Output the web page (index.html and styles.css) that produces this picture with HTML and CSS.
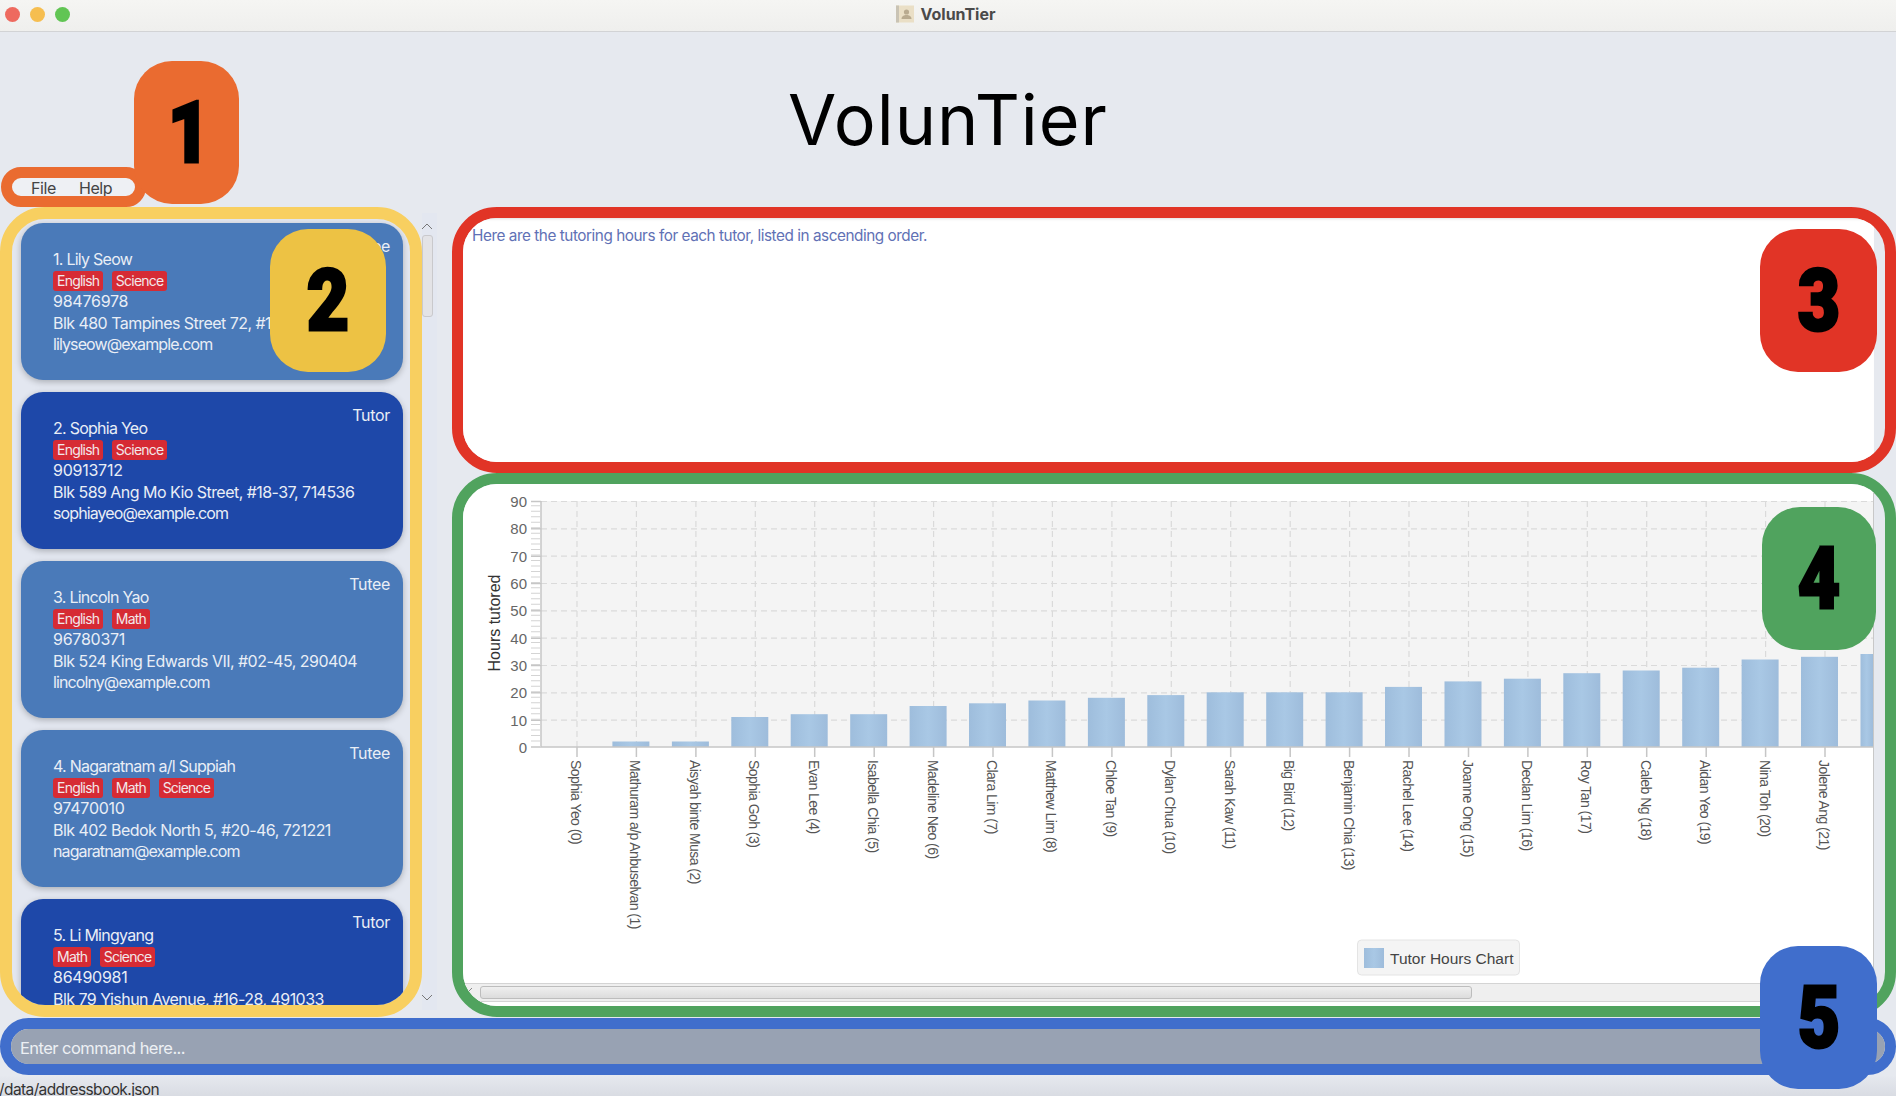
FILE: index.html
```html
<!DOCTYPE html>
<html lang="en">
<head>
<meta charset="utf-8">
<title>VolunTier</title>
<link rel="stylesheet" href="styles.css">
</head>
<body>
<div class="app">
  <header class="titlebar">
    <div class="lights"><span class="light red"></span><span class="light yellow"></span><span class="light green"></span></div>
    <div class="window-title">
      <svg class="doc-icon" width="18" height="18" viewBox="0 0 18 18"><rect width="18" height="17" y="0.5" fill="#eadfc6"/><rect width="3" height="17" y="0.5" fill="#c9c3b4"/><circle cx="10.5" cy="7" r="2.6" fill="#b9ab90"/><path d="M5.5 14c0-3 2.5-4 5-4s5 1 5 4z" fill="#b9ab90"/></svg>
      <span>VolunTier</span>
    </div>
    <div></div>
  </header>

  <h1 class="app-title">VolunTier</h1>

  <nav class="menubar"><div class="menu-inner"><span>File</span><span>Help</span></div></nav>

  <main class="workspace">
    <section class="sidebar">
      <div class="list-ring">
        <article class="card tutee">
          <div class="role">Tutee</div>
          <div class="name">1. Lily Seow</div>
          <div class="tags"><span class="tag">English</span><span class="tag">Science</span></div>
          <div class="phone">98476978</div>
          <div class="address">Blk 480 Tampines Street 72, #14-33, 520480</div>
          <div class="email">lilyseow@example.com</div>
        </article>
        <article class="card tutor">
          <div class="role">Tutor</div>
          <div class="name">2. Sophia Yeo</div>
          <div class="tags"><span class="tag">English</span><span class="tag">Science</span></div>
          <div class="phone">90913712</div>
          <div class="address">Blk 589 Ang Mo Kio Street, #18-37, 714536</div>
          <div class="email">sophiayeo@example.com</div>
        </article>
        <article class="card tutee">
          <div class="role">Tutee</div>
          <div class="name">3. Lincoln Yao</div>
          <div class="tags"><span class="tag">English</span><span class="tag">Math</span></div>
          <div class="phone">96780371</div>
          <div class="address">Blk 524 King Edwards VII, #02-45, 290404</div>
          <div class="email">lincolny@example.com</div>
        </article>
        <article class="card tutee">
          <div class="role">Tutee</div>
          <div class="name">4. Nagaratnam a/l Suppiah</div>
          <div class="tags"><span class="tag">English</span><span class="tag">Math</span><span class="tag">Science</span></div>
          <div class="phone">97470010</div>
          <div class="address">Blk 402 Bedok North 5, #20-46, 721221</div>
          <div class="email">nagaratnam@example.com</div>
        </article>
        <article class="card tutor">
          <div class="role">Tutor</div>
          <div class="name">5. Li Mingyang</div>
          <div class="tags"><span class="tag">Math</span><span class="tag">Science</span></div>
          <div class="phone">86490981</div>
          <div class="address">Blk 79 Yishun Avenue, #16-28, 491033</div>
          <div class="email">limingyang@example.com</div>
        </article>
      </div>
      <div class="vscroll">
        <svg class="chev" width="12" height="7" viewBox="0 0 12 7"><path d="M1 6l5-5 5 5" fill="none" stroke="#777" stroke-width="1"/></svg>
        <div class="vthumb"></div>
        <div class="vspacer"></div>
        <svg class="chev" width="12" height="7" viewBox="0 0 12 7"><path d="M1 1l5 5 5-5" fill="none" stroke="#777" stroke-width="1"/></svg>
      </div>
    </section>

    <section class="panels">
      <div class="result-ring">
        <div class="result-box">Here are the tutoring hours for each tutor, listed in ascending order.</div>
      </div>
      <div class="chart-ring">
        <div class="chart-box">
          <svg class="chart" width="1410" height="499" viewBox="463 484 1410 499">
            <defs>
              <linearGradient id="barfill" x1="0" x2="1" y1="0" y2="0">
                <stop offset="0" stop-color="#9ebddc"/><stop offset="0.5" stop-color="#a9c8e5"/><stop offset="1" stop-color="#9ebcdb"/>
              </linearGradient>
            </defs>
            <rect x="541" y="501" width="1332" height="246" fill="#f4f4f4"/>
            <g class="grid">
              <path d="M541 501.500H1873M541 528.800H1873M541 556.200H1873M541 583.500H1873M541 610.800H1873M541 638.200H1873M541 665.500H1873M541 692.800H1873M541 720.200H1873"/>
              <path d="M577 501V747M636.400 501V747M695.900 501V747M755.300 501V747M814.700 501V747M874.200 501V747M933.600 501V747M993 501V747M1052.400 501V747M1111.900 501V747M1171.300 501V747M1230.700 501V747M1290.200 501V747M1349.600 501V747M1409 501V747M1468.500 501V747M1527.900 501V747M1587.300 501V747M1646.700 501V747M1706.200 501V747M1765.600 501V747M1825 501V747"/>
            </g>
            <g fill="url(#barfill)">
              <rect x="612.400" y="741.500" width="37" height="5.500"/>
              <rect x="671.900" y="741.500" width="37" height="5.500"/>
              <rect x="731.300" y="717" width="37" height="30"/>
              <rect x="790.700" y="714.200" width="37" height="32.800"/>
              <rect x="850.200" y="714.200" width="37" height="32.800"/>
              <rect x="909.600" y="706" width="37" height="41"/>
              <rect x="969" y="703.300" width="37" height="43.700"/>
              <rect x="1028.400" y="700.500" width="37" height="46.500"/>
              <rect x="1087.900" y="697.800" width="37" height="49.200"/>
              <rect x="1147.300" y="695.100" width="37" height="51.900"/>
              <rect x="1206.700" y="692.300" width="37" height="54.700"/>
              <rect x="1266.200" y="692.300" width="37" height="54.700"/>
              <rect x="1325.600" y="692.300" width="37" height="54.700"/>
              <rect x="1385" y="686.900" width="37" height="60.100"/>
              <rect x="1444.500" y="681.400" width="37" height="65.600"/>
              <rect x="1503.900" y="678.700" width="37" height="68.300"/>
              <rect x="1563.300" y="673.200" width="37" height="73.800"/>
              <rect x="1622.700" y="670.500" width="37" height="76.500"/>
              <rect x="1682.200" y="667.700" width="37" height="79.300"/>
              <rect x="1741.600" y="659.500" width="37" height="87.500"/>
              <rect x="1801" y="656.800" width="37" height="90.200"/>
              <rect x="1860.500" y="654" width="12.500" height="93"/>
            </g>
            <g class="axis">
              <path d="M531 747H1873M541 501V747"/>
              <path d="M531 501.500H541M531 528.800H541M531 556.200H541M531 583.500H541M531 610.800H541M531 638.200H541M531 665.500H541M531 692.800H541M531 720.200H541"/>
              <path d="M577 747V757M636.400 747V757M695.900 747V757M755.300 747V757M814.700 747V757M874.200 747V757M933.600 747V757M993 747V757M1052.400 747V757M1111.900 747V757M1171.300 747V757M1230.700 747V757M1290.200 747V757M1349.600 747V757M1409 747V757M1468.500 747V757M1527.900 747V757M1587.300 747V757M1646.700 747V757M1706.200 747V757M1765.600 747V757M1825 747V757"/>
            </g>
            <path class="minor" d="M536 747V501"/>
            <g class="ytick">
              <text x="527" y="507">90</text><text x="527" y="534">80</text><text x="527" y="561.500">70</text><text x="527" y="589">60</text><text x="527" y="616">50</text><text x="527" y="643.500">40</text><text x="527" y="671">30</text><text x="527" y="698">20</text><text x="527" y="725.500">10</text><text x="527" y="752.500">0</text>
            </g>
            <text class="ytitle" transform="rotate(-90 500 623)" x="500" y="623">Hours tutored</text>
            <g class="xtick">
              <text transform="rotate(90 571 760)" x="571" y="760">Sophia Yeo (0)</text>
              <text transform="rotate(90 630.400 760)" x="630.400" y="760">Mathuram a/p Anbuselvan (1)</text>
              <text transform="rotate(90 689.900 760)" x="689.900" y="760">Aisyah binte Musa (2)</text>
              <text transform="rotate(90 749.300 760)" x="749.300" y="760">Sophia Goh (3)</text>
              <text transform="rotate(90 808.700 760)" x="808.700" y="760">Evan Lee (4)</text>
              <text transform="rotate(90 868.200 760)" x="868.200" y="760">Isabella Chia (5)</text>
              <text transform="rotate(90 927.600 760)" x="927.600" y="760">Madeline Neo (6)</text>
              <text transform="rotate(90 987 760)" x="987" y="760">Clara Lim (7)</text>
              <text transform="rotate(90 1046.400 760)" x="1046.400" y="760">Matthew Lim (8)</text>
              <text transform="rotate(90 1105.900 760)" x="1105.900" y="760">Chloe Tan (9)</text>
              <text transform="rotate(90 1165.300 760)" x="1165.300" y="760">Dylan Chua (10)</text>
              <text transform="rotate(90 1224.700 760)" x="1224.700" y="760">Sarah Kaw (11)</text>
              <text transform="rotate(90 1284.200 760)" x="1284.200" y="760">Big Bird (12)</text>
              <text transform="rotate(90 1343.600 760)" x="1343.600" y="760">Benjamin Chia (13)</text>
              <text transform="rotate(90 1403 760)" x="1403" y="760">Rachel Lee (14)</text>
              <text transform="rotate(90 1462.500 760)" x="1462.500" y="760">Joanne Ong (15)</text>
              <text transform="rotate(90 1521.900 760)" x="1521.900" y="760">Declan Lim (16)</text>
              <text transform="rotate(90 1581.300 760)" x="1581.300" y="760">Roy Tan (17)</text>
              <text transform="rotate(90 1640.700 760)" x="1640.700" y="760">Caleb Ng (18)</text>
              <text transform="rotate(90 1700.200 760)" x="1700.200" y="760">Aidan Yeo (19)</text>
              <text transform="rotate(90 1759.600 760)" x="1759.600" y="760">Nina Toh (20)</text>
              <text transform="rotate(90 1819 760)" x="1819" y="760">Jolene Ang (21)</text>
            </g>
            <rect class="legend" x="1357.500" y="940" width="162" height="35" rx="4"/>
            <rect x="1364" y="948" width="20" height="20" fill="url(#barfill)"/>
            <text class="legend-text" x="1390" y="963.500">Tutor Hours Chart</text>
          </svg>
          <div class="hscroll">
            <svg class="hchev" width="7" height="12" viewBox="0 0 7 12"><path d="M6 1L1 6l5 5" fill="none" stroke="#888" stroke-width="1"/></svg>
            <div class="hthumb"></div>
          </div>
        </div>
      </div>
    </section>
  </main>

  <div class="command-ring"><div class="command-box">Enter command here...</div></div>
  <footer class="status">/data/addressbook.json</footer>

  <div class="badge b1"><span>1</span></div>
  <div class="badge b2"><span>2</span></div>
  <div class="badge b3"><span>3</span></div>
  <div class="badge b4"><span>4</span></div>
  <div class="badge b5"><span>5</span></div>
</div>
</body>
</html>
```
FILE: styles.css
```css
* { box-sizing: border-box; }
html, body { margin: 0; background: #fff; }
body { font-family: "Inter", "Liberation Sans", sans-serif; }

.app {
  position: relative;
  width: 1896px;
  height: 1096px;
  background: #e6e9ef;
  display: flex;
  flex-direction: column;
  overflow: hidden;
}

/* window chrome */
.titlebar {
  height: 32px;
  flex: none;
  display: grid;
  grid-template-columns: 1fr auto 1fr;
  align-items: center;
  padding: 0 5px 3px;
  background: linear-gradient(#f5f5f3, #efefed);
  border-bottom: 1px solid #d2d3d5;
}
.lights { display: flex; gap: 10px; }
.light { width: 15px; height: 15px; border-radius: 50%; }
.light.red { background: #ee6a5f; }
.light.yellow { background: #f6be50; }
.light.green { background: #61c554; }
.window-title {
  display: flex;
  align-items: center;
  gap: 7px;
  font-size: 16px;
  font-weight: 700;
  color: #4a4a4a;
  margin-right: 5px;
}
.doc-icon { display: block; }

.app-title {
  height: 135px;
  flex: none;
  margin: 0;
  padding-top: 40px;
  font-size: 70px;
  font-weight: 400;
  line-height: 95px;
  text-align: center;
  color: #000;
  letter-spacing: 1px;
}

/* menu */
.menubar {
  width: 145px;
  height: 40px;
  flex: none;
  margin-left: 1px;
  border: 11px solid #ea6b30;
  border-radius: 20px;
  background: #eef0f4;
  overflow: hidden;
}
.menu-inner {
  display: flex;
  gap: 23px;
  padding: 1px 0 0 19px;
  font-size: 16px;
  letter-spacing: -0.4px;
  line-height: 19px;
  color: #444;
}

/* main grid */
.workspace {
  height: 810px;
  flex: none;
  display: grid;
  grid-template-columns: 452px 1444px;
}
.sidebar { display: flex; align-items: flex-start; height: 810px; }
.list-ring {
  width: 422px;
  height: 810px;
  flex: none;
  border: 12px solid #f8cf60;
  border-radius: 45px;
  background: #e3e7f0;
  padding: 4px 7px 0 9px;
  overflow: hidden;
  display: flex;
  flex-direction: column;
  gap: 12px;
}
.card {
  height: 157px;
  flex: none;
  border-radius: 22px;
  padding: 13px 13px 0 32px;
  color: #e9eef6;
  font-size: 16px;
  line-height: 21.500px;
  box-shadow: 0 2px 6px rgba(0, 0, 0, .25);
  letter-spacing: -0.54px;
  white-space: nowrap;
}
.card.tutee { background: #4a7ab9; }
.card.tutor { background: #1e48a9; }
.role { text-align: right; line-height: 20px; letter-spacing: -0.3px; }
.name { margin-top: -7px; letter-spacing: -0.74px; }
.phone { letter-spacing: -0.25px; }
.email { letter-spacing: -0.9px; }
.tags { display: flex; gap: 8.500px; height: 20.500px; align-items: center; }
.tag {
  background: #d62b34;
  border-radius: 3px;
  padding: 0 4px;
  height: 20px;
  line-height: 20px;
  font-size: 14px;
  letter-spacing: -0.77px;
  color: #f2e8ea;
}

.vscroll {
  width: 15px;
  height: 797px;
  margin-top: 6px;
  flex: none;
  background: #e3e7f0;
  display: flex;
  flex-direction: column;
  align-items: center;
  padding: 10px 0 9px;
}
.chev { display: block; flex: none; margin-left: -5px; }
.vthumb {
  width: 11px;
  height: 82px;
  margin: 5px 0 0 -5px;
  background: #e3e3e6;
  border: 1px solid #c9c9cc;
  border-radius: 3px;
  flex: none;
}
.vspacer { flex: 1; }

/* right panels */
.panels { display: flex; flex-direction: column; }
.result-ring {
  height: 266px;
  flex: none;
  border: 11px solid #e13426;
  border-radius: 45px;
  overflow: hidden;
}
.result-box {
  width: 1411px;
  height: 100%;
  background: #fff;
  box-shadow: inset 0 3px 3px -2px rgba(0, 0, 0, .12);
  padding: 8px 0 0 9px;
  font-size: 15.300px;
  line-height: 20px;
  color: #6171b5;
  letter-spacing: -0.45px;
}
.chart-ring {
  height: 544px;
  flex: none;
  border: 11px solid #50a35e;
  border-radius: 45px;
  overflow: hidden;
}
.chart-box {
  width: 1411px;
  height: 100%;
  background: #fff;
  border-right: 1px solid #c8c8c8;
}
.chart { display: block; }
.grid path { fill: none; stroke: #dadada; stroke-width: 1.200; stroke-dasharray: 6 4; }
.axis path { fill: none; stroke: #c6c6c6; stroke-width: 1.500; }
.minor { fill: none; stroke: #d4d4d4; stroke-width: 10; stroke-dasharray: 1 4.470; }
.ytick text {
  font: 15px "Liberation Sans", sans-serif;
  fill: #666;
  text-anchor: end;
}
.ytitle {
  font: 16px "Liberation Sans", sans-serif;
  fill: #333;
  text-anchor: middle;
}
.xtick text { font: 14px "Liberation Sans", sans-serif; letter-spacing: -0.55px; fill: #555; }
.legend { fill: #f4f4f4; stroke: #e4e4e4; stroke-width: 1; }
.legend-text { font: 15.500px "Liberation Sans", sans-serif; fill: #444; }

.hscroll {
  height: 19px;
  background: #efefef;
  border-top: 1px solid #d4d4d4;
  border-bottom: 1px solid #d4d4d4;
  display: flex;
  align-items: center;
  padding-left: 3px;
  gap: 7px;
}
.hchev { display: block; flex: none; }
.hthumb {
  width: 992px;
  height: 13px;
  border: 1px solid #bdbdbd;
  border-radius: 3px;
  background: linear-gradient(#efefef, #dcdcdc);
}

/* command box */
.command-ring {
  height: 57px;
  flex: none;
  margin-top: 1px;
  border: 11.500px solid #406ecc;
  border-radius: 29px;
  overflow: hidden;
}
.command-box {
  height: 100%;
  background: #98a2b3;
  padding: 1px 0 0 9px;
  font-size: 16.500px;
  letter-spacing: -0.55px;
  line-height: 36px;
  color: #edf0f4;
}
.status {
  height: 21px;
  flex: none;
  padding: 5px 0 0 0;
  margin-left: -1px;
  font-size: 15.500px;
  letter-spacing: -0.6px;
  line-height: 19px;
  color: #333;
  background: linear-gradient(#e6e9ef, #d9dce3);
  overflow: hidden;
}

/* numbered annotation badges */
.badge {
  position: absolute;
  display: flex;
  align-items: center;
  justify-content: center;
  height: 143px;
  border-radius: 38px;
}
.badge span {
  font-family: "Roboto", "Liberation Sans", sans-serif;
  font-size: 86px;
  font-weight: 900;
  line-height: 1;
  color: #000;
  transform: scaleX(.85);
  -webkit-text-stroke: 3px #000;
}
.b1 { left: 134px; top: 61px; width: 105px; padding-left: 5px; background: #ea6b30; }
.b2 { left: 270px; top: 229px; width: 116px; background: #edc244; }
.b3 { left: 1760px; top: 229px; width: 117px; background: #e13426; }
.b4 { left: 1762px; top: 507px; width: 114px; background: #50a35e; }
.b5 { left: 1760px; top: 946px; width: 117px; background: #406ecc; }
```
